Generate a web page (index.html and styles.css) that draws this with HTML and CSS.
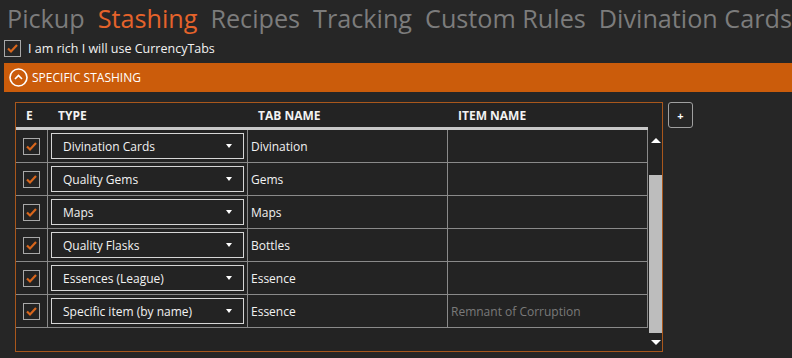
FILE: index.html
```html
<!DOCTYPE html>
<html lang="en">

<head>
    <meta charset="UTF-8">
    <meta name="viewport" content="width=device-width, initial-scale=1.0">
    <title>Stashing</title>
    <link rel="stylesheet" href="styles.css">
</head>

<body>
    <nav class="tabs">
        <span class="tab">Pickup</span>
        <span class="tab active">Stashing</span>
        <span class="tab">Recipes</span>
        <span class="tab">Tracking</span>
        <span class="tab">Custom Rules</span>
        <span class="tab">Divination Cards</span>
    </nav>

    <label class="rich-row">
        <span class="check">
            <svg width="15" height="15" viewBox="0 0 15 15"><polyline points="3,7.5 6,10.5 12,4" /></svg>
        </span>
        I am rich I will use CurrencyTabs
    </label>

    <div class="expander-head">
        <svg class="expander-icon" width="19" height="19" viewBox="0 0 19 19">
            <circle cx="9.5" cy="9.5" r="8.5" />
            <polyline points="6,11 9.5,7.5 13,11" />
        </svg>
        SPECIFIC STASHING
    </div>

    <div class="expander-body">
        <div class="grid-box">
            <div class="grid-header">
                <div class="col col-e">E</div>
                <div class="col col-type">TYPE</div>
                <div class="col col-tab">TAB NAME</div>
                <div class="col col-item">ITEM NAME</div>
            </div>
            <div class="grid-main">
                <div class="rows" id="rows"></div>
                <div class="scrollbar">
                    <div class="sb-btn sb-up"><span class="tri-up"></span></div>
                    <div class="sb-track"><div class="sb-thumb"></div></div>
                    <div class="sb-btn sb-down"><span class="tri-down"></span></div>
                </div>
            </div>
        </div>
        <button class="add-btn">+</button>
    </div>

    <script>
        const rules = [
            { type: 'Divination Cards', tab: 'Divination', item: '' },
            { type: 'Quality Gems', tab: 'Gems', item: '' },
            { type: 'Maps', tab: 'Maps', item: '' },
            { type: 'Quality Flasks', tab: 'Bottles', item: '' },
            { type: 'Essences (League)', tab: 'Essence', item: '' },
            { type: 'Specific item (by name)', tab: 'Essence', item: 'Remnant of Corruption' }
        ];
        const rowsDiv = document.getElementById('rows');

        rules.forEach(rule => {
            const row = document.createElement('div');
            row.classList.add('row');
            row.innerHTML = `
                <div class="cell col-e">
                    <span class="check"><svg width="15" height="15" viewBox="0 0 15 15"><polyline points="3,7.5 6,10.5 12,4" /></svg></span>
                </div>
                <div class="cell col-type">
                    <div class="combo"><span>${rule.type}</span><span class="tri-down small"></span></div>
                </div>
                <div class="cell col-tab">${rule.tab}</div>
                <div class="cell col-item">${rule.item}</div>`;
            rowsDiv.appendChild(row);
        });
    </script>
</body>

</html>
```

FILE: styles.css
```css
body {
    margin: 0;
    background: #262626;
    color: #f2f2f2;
    font-family: "Open Sans", "Noto Sans", sans-serif;
    font-size: 12px;
}

.tabs {
    display: flex;
    gap: 13px;
    padding-left: 7px;
    height: 36px;
    align-items: center;
    white-space: nowrap;
}

.tab {
    font-size: 25.2px;
    color: #7c7c7c;
    line-height: 36px;
}

.tab.active {
    color: #e5632b;
}

.check {
    width: 15px;
    height: 15px;
    border: 1px solid #a8a8a8;
    display: inline-flex;
    align-items: center;
    justify-content: center;
    flex-shrink: 0;
}

.check polyline {
    fill: none;
    stroke: #d8661c;
    stroke-width: 2.2;
}

.rich-row {
    display: flex;
    align-items: center;
    gap: 7px;
    margin: 4px 0 0 4px;
    height: 17px;
    font-size: 12.5px;
}

.expander-head {
    margin: 6px 0 0 4px;
    height: 29px;
    background: #cb5c0b;
    display: flex;
    align-items: center;
    gap: 4px;
    padding-left: 5px;
    color: #fff;
}

.expander-icon circle,
.expander-icon polyline {
    fill: none;
    stroke: #fff;
    stroke-width: 1.6;
}

.expander-body {
    display: flex;
    align-items: flex-start;
    padding: 10px 0 0 15px;
}

.grid-box {
    width: 646px;
    height: 248px;
    border: 1px solid #a9571c;
    background: #232323;
}

.grid-header {
    display: flex;
    width: 632px;
    height: 24px;
    border-bottom: 3px solid #c8c8c8;
    font-weight: bold;
    align-items: center;
}

.col-e { width: 32px; }
.col-type,
.col-tab,
.col-item { width: 200px; }

.grid-header .col {
    padding-left: 10px;
    box-sizing: border-box;
}

.grid-main {
    display: flex;
    height: 221px;
}

.rows {
    width: 632px;
}

.row {
    display: flex;
    height: 32px;
    border-bottom: 1px solid #8a8a8a;
}

.cell {
    box-sizing: border-box;
    border-right: 1px solid #8a8a8a;
    display: flex;
    align-items: center;
    padding-left: 3px;
}

.cell.col-e {
    padding-left: 0;
    justify-content: center;
}

.cell.col-item {
    color: #7a7a7a;
}

.combo {
    height: 24px;
    border: 1px solid #d6d6d6;
    display: flex;
    align-items: center;
    justify-content: space-between;
    padding: 0 11px 0 11px;
    width: 169px;
}

.scrollbar {
    width: 13px;
    margin-left: 1px;
    display: flex;
    flex-direction: column;
}

.sb-btn {
    display: flex;
    align-items: center;
    justify-content: center;
}

.sb-up { height: 20px; }
.sb-down { height: 18px; }

.sb-track {
    flex: 1;
    padding-top: 25px;
}

.sb-thumb {
    height: 158px;
    background: #bdbdbd;
}

.tri-up {
    width: 0;
    height: 0;
    border-left: 5px solid transparent;
    border-right: 5px solid transparent;
    border-bottom: 5px solid #fff;
}

.tri-down {
    width: 0;
    height: 0;
    border-left: 5px solid transparent;
    border-right: 5px solid transparent;
    border-top: 5px solid #fff;
}

.tri-down.small {
    border-left-width: 3px;
    border-right-width: 3px;
    border-top-width: 4px;
}

.add-btn {
    margin-left: 5px;
    width: 25px;
    height: 26px;
    border: 1px solid #a0a0a0;
    border-radius: 3px;
    background: #262626;
    color: #fff;
    font-size: 11px;
    font-weight: bold;
    padding: 0;
    font-family: "Open Sans", sans-serif;
}
```
